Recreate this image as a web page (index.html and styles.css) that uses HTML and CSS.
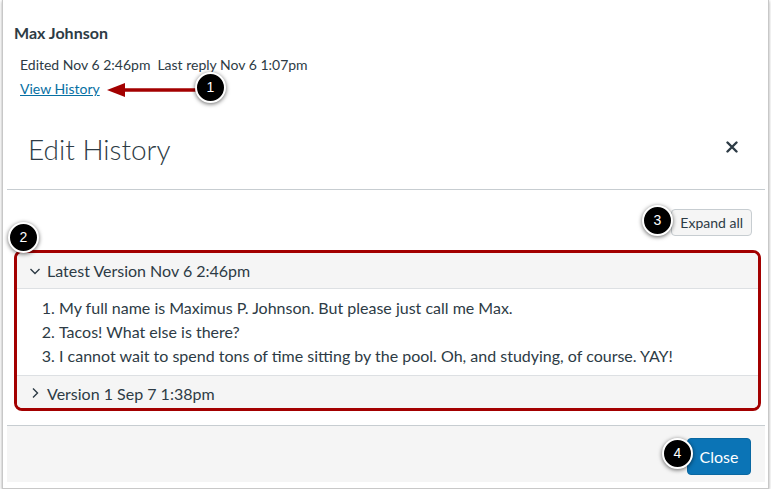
FILE: index.html
```html
<!DOCTYPE html>
<html>
<head>
<meta charset="utf-8">
<link rel="stylesheet" href="styles.css">
</head>
<body>
<div class="frame">
  <div class="post">
    <div class="author">Max Johnson</div>
    <div class="meta">
      <div class="meta-line"><span>Edited Nov 6 2:46pm</span><span>Last reply Nov 6 1:07pm</span></div>
      <div class="meta-line"><a class="link" href="#">View History</a></div>
    </div>
  </div>
  <div class="modal">
    <div class="modal-header">
      <h2 class="modal-title">Edit History</h2>
      <svg class="close-x" width="12" height="12" viewBox="0 0 12 12"><path d="M1.5 1.5 L10.5 10.5 M10.5 1.5 L1.5 10.5" stroke="#2d3b45" stroke-width="2.4" stroke-linecap="round"/></svg>
    </div>
    <div class="modal-body">
      <div class="toolbar"><button class="btn">Expand all</button></div>
      <div class="highlight">
        <div class="acc-head">
          <svg class="chev" width="12" height="12" viewBox="0 0 12 12"><path d="M1.5 4 L6 8.5 L10.5 4" fill="none" stroke="#2d3b45" stroke-width="1.4"/></svg>
          <span>Latest Version Nov 6 2:46pm</span>
        </div>
        <ol class="acc-body">
          <li>My full name is Maximus P. Johnson. But please just call me Max.</li>
          <li>Tacos! What else is there?</li>
          <li>I cannot wait to spend tons of time sitting by the pool. Oh, and studying, of course. YAY!</li>
        </ol>
        <div class="acc-head last">
          <svg class="chev" width="12" height="12" viewBox="0 0 12 12"><path d="M4 1.5 L8.5 6 L4 10.5" fill="none" stroke="#2d3b45" stroke-width="1.4"/></svg>
          <span>Version 1 Sep 7 1:38pm</span>
        </div>
      </div>
    </div>
    <div class="modal-footer"><button class="btn-primary">Close</button></div>
  </div>

  <svg class="arrow" width="100" height="20" viewBox="0 0 100 20"><path d="M18 10 L92 10" stroke="#a30000" stroke-width="3.5"/><path d="M3 10 L21 3 L21 17 Z" fill="#a30000"/></svg>
  <div class="badge b1">1</div>
  <div class="badge b2">2</div>
  <div class="badge b3">3</div>
  <div class="badge b4">4</div>
</div>
</body>
</html>
```
FILE: styles.css
```css
html, body {
  margin: 0;
  padding: 0;
  background: #fff;
  overflow: hidden;
}
body {
  font-family: Lato, "Open Sans", sans-serif;
  color: #2d3b45;
}
.frame {
  position: relative;
  margin-left: 2px;
  width: 765px;
  height: 488px;
  border: 1px solid #c8c8c8;
  border-top: none;
  box-shadow: 0 1px 3px rgba(0,0,0,0.35);
  background: #fff;
  box-sizing: content-box;
}
.post {
  padding: 23px 0 0 11px;
}
.author {
  font-size: 16px;
  font-weight: 700;
  line-height: 20px;
}
.meta {
  margin-top: 10px;
  padding-left: 6px;
  font-size: 14px;
}
.meta-line {
  line-height: 24px;
  display: flex;
  gap: 7px;
}
.link {
  color: #0770a3;
  text-decoration: underline;
}
.modal {
  margin: 12px 3px 0 4px;
}
.modal-header {
  display: flex;
  align-items: center;
  justify-content: space-between;
  padding: 18px 27px 22px 21px;
  border-bottom: 1px solid #c7cdd1;
}
.modal-title {
  margin: 0;
  font-size: 28px;
  font-weight: 300;
  line-height: 36px;
}
.close-x {
  display: block;
  margin-top: -4px;
}
.modal-body {
  padding: 19px 4px 14px 7px;
}
.toolbar {
  display: flex;
  justify-content: flex-end;
  padding-right: 9px;
  margin-bottom: 14px;
}
.btn {
  font-family: Lato, sans-serif;
  font-size: 14px;
  color: #2d3b45;
  background: #f5f5f5;
  border: 1px solid #c7cdd1;
  border-radius: 4px;
  height: 27px;
  padding: 0 8px;
}
.highlight {
  border: 3px solid #a30000;
  border-radius: 8px;
  overflow: hidden;
}
.acc-head {
  display: flex;
  align-items: center;
  gap: 6px;
  height: 35px;
  padding-left: 12px;
  background: #f5f5f5;
  font-size: 16px;
  border-bottom: 1px solid #dde0e3;
}
.acc-head.last {
  border-bottom: none;
  border-top: 1px solid #dde0e3;
  padding-top: 2px;
  box-sizing: border-box;
  height: 33px;
}
.chev {
  display: block;
}
.acc-body {
  margin: 0;
  padding: 7px 0 7px 42px;
  font-size: 16px;
  line-height: 24px;
}
.modal-footer {
  display: flex;
  justify-content: flex-end;
  background: #f5f5f5;
  border-top: 1px solid #c7cdd1;
  padding: 12px 14px 7px;
}
.btn-primary {
  font-family: Lato, sans-serif;
  font-size: 16px;
  color: #fff;
  background: #0b74b6;
  border: 1px solid #0a68a2;
  border-radius: 4px;
  width: 64px;
  height: 37px;
}
.arrow {
  position: absolute;
  left: 101px;
  top: 80px;
}
.badge {
  position: absolute;
  width: 27px;
  height: 27px;
  border-radius: 50%;
  background: #000;
  border: 2px solid #fff;
  box-shadow: 0 1px 4px rgba(0,0,0,0.6);
  color: #fff;
  font-family: "Liberation Sans", sans-serif;
  font-size: 14px;
  line-height: 27px;
  text-align: center;
}
.b1 { left: 192px; top: 72px; }
.b2 { left: 5px; top: 222px; }
.b3 { left: 639px; top: 205px; }
.b4 { left: 659px; top: 438px; }
```
